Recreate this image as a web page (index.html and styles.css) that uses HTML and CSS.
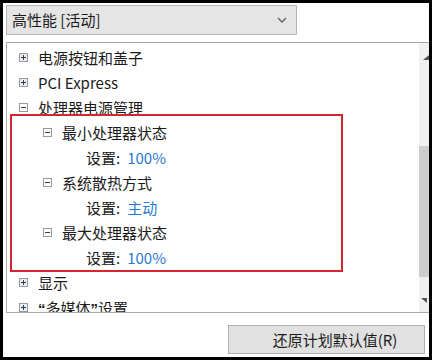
FILE: index.html
```html
<!DOCTYPE html>
<html lang="zh-CN">
<head>
<meta charset="utf-8">
<title>电源选项</title>
<link rel="stylesheet" href="styles.css">
</head>
<body>
<div class="frame">
  <div class="select">
    <span class="select-text">高性能 [活动]</span>
    <svg class="chev" width="10" height="6" viewBox="0 0 10 6"><path d="M1 1 L5 5 L9 1" fill="none" stroke="#606060" stroke-width="1.3"/></svg>
  </div>
  <div class="list">
    <div class="tree">
      <div class="row lv0"><span class="box plus"></span><span>电源按钮和盖子</span></div>
      <div class="row lv0"><span class="box plus"></span><span>PCI Express</span></div>
      <div class="row lv0"><span class="box minus"></span><span>处理器电源管理</span></div>
      <div class="row lv1"><span class="box minus"></span><span>最小处理器状态</span></div>
      <div class="row lv2"><span>设置:</span><span class="val">100%</span></div>
      <div class="row lv1"><span class="box minus"></span><span>系统散热方式</span></div>
      <div class="row lv2"><span>设置:</span><span class="val">主动</span></div>
      <div class="row lv1"><span class="box minus"></span><span>最大处理器状态</span></div>
      <div class="row lv2"><span>设置:</span><span class="val">100%</span></div>
      <div class="row lv0"><span class="box plus"></span><span>显示</span></div>
      <div class="row lv0"><span class="box plus"></span><span><span class="q">“</span>多媒体<span class="q">”</span>设置</span></div>
    </div>
    <div class="scrollbar">
      <div class="arrow-top"><svg width="6" height="5" viewBox="0 0 6 5"><path d="M0 5 L6 0 L6 5 Z" fill="#555"/></svg></div>
      <div class="thumb"></div>
      <div class="arrow-bottom"><svg width="6" height="5" viewBox="0 0 6 5"><path d="M0 0 L6 0 L6 5 Z" fill="#555"/></svg></div>
    </div>
    <div class="highlight"></div>
  </div>
  <div class="footer">
    <div class="button">还原计划默认值(R)</div>
  </div>
</div>
</body>
</html>
```

FILE: styles.css
```css
html, body {
  margin: 0;
  padding: 0;
  background: #ffffff;
}
body {
  font-family: "Noto Sans CJK SC", "Noto Sans", sans-serif;
  font-size: 15px;
  color: #1b1b1b;
}
.frame {
  width: 432px;
  height: 360px;
  box-sizing: border-box;
  border: 3px solid #000;
  display: flex;
  flex-direction: column;
  background: #fff;
}
.select {
  margin: 2px 0 0 3px;
  width: 291px;
  height: 30px;
  box-sizing: border-box;
  border: 1px solid #b4b4b4;
  background: #e5e5e5;
  display: flex;
  align-items: center;
  padding: 0 5px;
}
.select-text {
  flex: 1;
  line-height: 28px;
}
.chev {
  margin-right: 4px;
}
.list {
  position: relative;
  margin: 7px 0 0 3px;
  height: 271px;
  box-sizing: border-box;
  border: 1px solid #a9a9a9;
  border-right: none;
  display: flex;
}
.tree {
  flex: 1;
  overflow: hidden;
  padding-top: 2px;
}
.row {
  height: 25px;
  line-height: 25px;
  display: flex;
  align-items: center;
  white-space: nowrap;
}
.lv0 { padding-left: 12px; }
.lv1 { padding-left: 36px; }
.lv2 { padding-left: 79px; }
.box {
  position: relative;
  width: 9px;
  height: 9px;
  box-sizing: border-box;
  border: 1px solid #9a9a9a;
  background: #fff;
  margin-right: 10px;
  flex: none;
}
.box::before {
  content: "";
  position: absolute;
  left: 1px;
  top: 3px;
  width: 5px;
  height: 1px;
  background: #3a3a3a;
}
.plus::after {
  content: "";
  position: absolute;
  left: 3px;
  top: 1px;
  width: 1px;
  height: 5px;
  background: #3a3a3a;
}
.box.plus {
  background: #e8eef6;
}
.q {
  font-family: "Liberation Sans", sans-serif;
  font-weight: bold;
}
.val {
  color: #2b78d0;
  margin-left: 7px;
}
.scrollbar {
  width: 10px;
  background: #f0f0f0;
  display: flex;
  flex-direction: column;
  flex: none;
}
.arrow-top {
  height: 103px;
  display: flex;
  justify-content: flex-end;
  padding-top: 12px;
  box-sizing: border-box;
}
.thumb {
  height: 131px;
  background: #cdcdcd;
}
.arrow-bottom {
  margin-top: auto;
  height: 16px;
  display: flex;
  justify-content: flex-end;
  padding-right: 2px;
  padding-top: 2px;
  box-sizing: border-box;
}
.highlight {
  position: absolute;
  left: 3px;
  top: 71px;
  width: 333px;
  height: 158px;
  box-sizing: border-box;
  border: 2px solid #d3262d;
  pointer-events: none;
}
.footer {
  flex: 1;
  display: flex;
  justify-content: flex-end;
  align-items: flex-end;
  padding: 0 4px 3px 0;
}
.button {
  width: 197px;
  height: 29px;
  box-sizing: border-box;
  border: 1px solid #b0b0b0;
  background: #e1e1e1;
  line-height: 27px;
  text-align: center;
  padding-left: 17px;
  color: #1b1b1b;
}
```
